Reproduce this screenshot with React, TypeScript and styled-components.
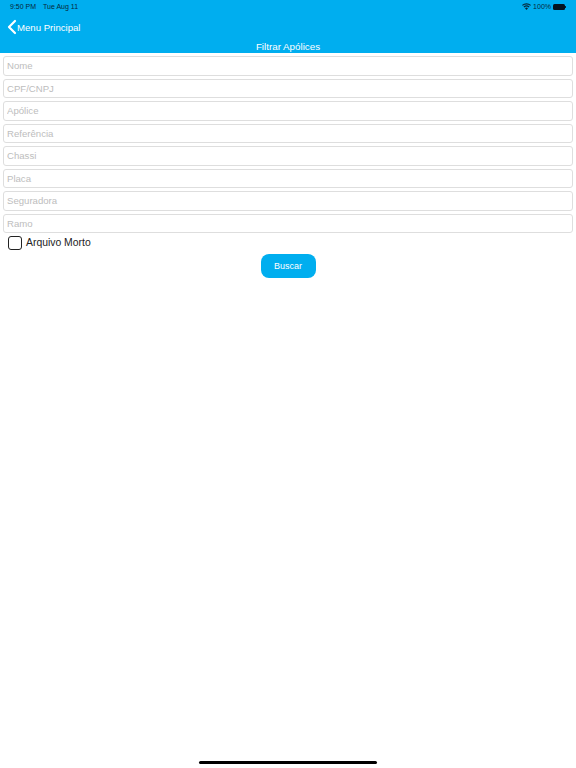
import React from "react";
import styled, { createGlobalStyle } from "styled-components";
import { ChevronLeft } from "lucide-react";

const GlobalStyle = createGlobalStyle`
  html, body {
    margin: 0;
    padding: 0;
    background: #fff;
  }
  * {
    box-sizing: border-box;
  }
`;

const Page = styled.div`
  display: flex;
  flex-direction: column;
  width: 576px;
  height: 768px;
  font-family: "Liberation Sans", Arial, sans-serif;
  background: #fff;
  overflow: hidden;
`;

const Header = styled.header`
  display: flex;
  flex-direction: column;
  height: 53px;
  flex-shrink: 0;
  background: #00aeef;
  color: #fff;
`;

const StatusBar = styled.div`
  display: flex;
  justify-content: space-between;
  align-items: center;
  height: 14px;
  padding: 0 10px;
  color: #06283a;
  font-size: 7px;
`;

const StatusGroup = styled.div`
  display: flex;
  align-items: center;
  gap: 7px;
`;

const StatusRight = styled(StatusGroup)`
  gap: 2px;
`;

const Battery = styled.div`
  display: flex;
  align-items: center;

  &::before {
    content: "";
    width: 12px;
    height: 6px;
    border-radius: 1.5px;
    background: #04141f;
  }

  &::after {
    content: "";
    width: 1px;
    height: 2px;
    background: #06283a;
  }
`;

const BackLink = styled.a`
  display: flex;
  align-items: center;
  height: 20px;
  margin-top: 4px;
  font-size: 9.6px;
  color: #fff;
`;

const BackIcon = styled(ChevronLeft)`
  width: 24px;
  height: 24px;
  margin-right: -7px;
`;

const Title = styled.div`
  margin-top: 3px;
  text-align: center;
  font-size: 9.8px;
  line-height: 13px;
`;

const Form = styled.form`
  display: flex;
  flex-direction: column;
  gap: 1px;
  padding: 3px 3px 0;
`;

const FieldList = styled.div`
  display: flex;
  flex-direction: column;
  gap: 3px;
`;

const Field = styled.input`
  display: block;
  width: 100%;
  height: 19.5px;
  padding: 0 3px;
  border: 1px solid #dedede;
  border-radius: 3px;
  background: #fff;
  font-family: inherit;
  font-size: 9.6px;
  outline: none;

  &::placeholder {
    color: #bdbdbd;
    opacity: 1;
  }
`;

const CheckRow = styled.label`
  display: flex;
  align-items: center;
  gap: 4px;
  height: 17px;
  padding-left: 5px;
  font-size: 10.4px;
  color: #222;
`;

const CheckBox = styled.span`
  width: 14px;
  height: 14px;
  border: 1px solid #222;
  border-radius: 3px;
`;

const Actions = styled.div`
  display: flex;
  justify-content: center;
  margin-top: 2px;
`;

const SearchButton = styled.button`
  width: 55px;
  height: 24px;
  padding: 0;
  border: none;
  border-radius: 8px;
  background: #00aeef;
  color: #fff;
  font-family: inherit;
  font-size: 9px;
`;

const HomeIndicator = styled.div`
  width: 178px;
  height: 3px;
  margin: auto auto 4px;
  border-radius: 2px;
  background: #000;
`;

const placeholders = [
  "Nome",
  "CPF/CNPJ",
  "Apólice",
  "Referência",
  "Chassi",
  "Placa",
  "Seguradora",
  "Ramo",
];

const WifiIcon = () => (
  <svg width="9" height="7" viewBox="0 0 18 14" fill="#06283a">
    <path d="M9 14 6 10.6a4.4 4.4 0 0 1 6 0L9 14Z" />
    <path d="M4.6 9 3 7.2a8.8 8.8 0 0 1 12 0L13.4 9a6.5 6.5 0 0 0-8.8 0Z" />
    <path d="M1.6 5.7 0 3.9a13.3 13.3 0 0 1 18 0l-1.6 1.8a11 11 0 0 0-14.8 0Z" />
  </svg>
);

export default function App() {
  return (
    <Page>
      <GlobalStyle />
      <Header>
        <StatusBar>
          <StatusGroup>
            <span>9:50 PM</span>
            <span>Tue Aug 11</span>
          </StatusGroup>
          <StatusRight>
            <WifiIcon />
            <span>100%</span>
            <Battery />
          </StatusRight>
        </StatusBar>
        <BackLink>
          <BackIcon strokeWidth={2.2} />
          Menu Principal
        </BackLink>
        <Title>Filtrar Apólices</Title>
      </Header>
      <Form>
        <FieldList>
          {placeholders.map((name) => (
            <Field key={name} placeholder={name} />
          ))}
        </FieldList>
        <CheckRow>
          <CheckBox />
          Arquivo Morto
        </CheckRow>
        <Actions>
          <SearchButton type="button">Buscar</SearchButton>
        </Actions>
      </Form>
      <HomeIndicator />
    </Page>
  );
}
